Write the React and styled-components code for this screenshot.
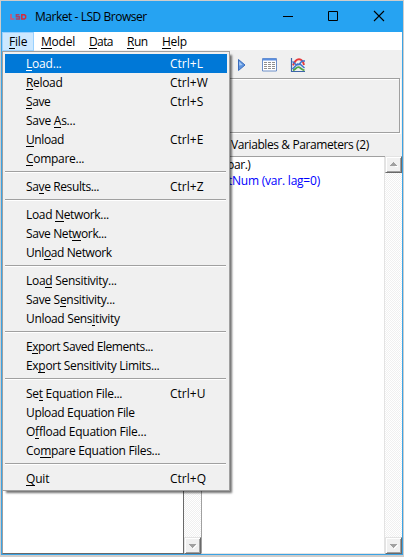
import React from "react";
import styled, { createGlobalStyle } from "styled-components";

const Global = createGlobalStyle`
  * { box-sizing: border-box; }
  body { margin: 0; overflow: hidden; }
`;

const Desktop = styled.div`
  width: 404px;
  height: 557px;
  padding: 1px 1px 2px 1px;
  background: #cfcdcb;
  font-family: "Open Sans", "Noto Sans", sans-serif;
  font-size: 12px;
  color: #000;
  cursor: default;
  white-space: pre;
`;

const Window = styled.div`
  position: relative;
  width: 402px;
  height: 554px;
  display: flex;
  flex-direction: column;
  border: 1px solid #3ca3e4;
  border-top: 0;
  background: #f0f0f0;
`;

const TitleBar = styled.div`
  height: 31px;
  margin: 0 -1px;
  display: flex;
  align-items: center;
  flex: none;
  background: #26a3f2;
  padding-left: 8px;
`;

const Title = styled.div`
  flex: 1;
  padding-left: 8px;
  line-height: 31px;
  letter-spacing: -0.46px;
`;

const Controls = styled.div`
  display: flex;
  width: 137px;
  height: 31px;
`;

const Control = styled.svg`
  width: 46px;
  height: 31px;
  flex: none;
  fill: none;
  stroke: #000;
`;

const MenuBar = styled.div`
  height: 18px;
  flex: none;
  display: flex;
  background: #fff;
`;

const MenuTitle = styled.div`
  width: ${(p) => p.$w}px;
  height: ${(p) => (p.$open ? 19 : 18)}px;
  line-height: 19px;
  padding-left: 7px;
  letter-spacing: ${(p) => p.$track || 0}px;
  background: ${(p) => (p.$open ? "#cce8ff" : "transparent")};
  box-shadow: ${(p) => (p.$open ? "inset 0 0 0 1px #99d1ff" : "none")};
`;

const Key = styled.span`
  box-shadow: 0 1px 0 currentColor;
  display: inline-block;
  line-height: 13px;
`;

const Toolbar = styled.div`
  height: 28px;
  flex: none;
  display: flex;
  padding: 7px 0 0 235px;
`;

const ToolIcon = styled.svg`
  width: ${(p) => p.$w}px;
  height: 16px;
  margin-right: ${(p) => p.$gap || 0}px;
  flex: none;
`;

const InfoPanel = styled.div`
  height: 55px;
  flex: none;
  margin: 0 2px 0 0;
  border: 1px solid #a0a0a0;
  box-shadow: inset 1px 1px 0 #fff, 1px 1px 0 #fff;
`;

const Caption = styled.div`
  height: 23px;
  flex: none;
  line-height: 24px;
  padding-left: 229px;
  letter-spacing: -0.4px;
`;

const Lists = styled.div`
  flex: 1;
  display: grid;
  grid-template-columns: 199px 201px;
`;

const ListBox = styled.div`
  display: flex;
  min-width: 0;
  background: #fff;
  border-top: 1px solid #a0a0a0;
  border-left: 1px solid #a0a0a0;
  border-bottom: 1px solid ${(p) => p.$edge};
`;

const ListRows = styled.div`
  flex: 1;
  overflow: hidden;
  padding: 0 0 0 29px;
  border-right: 1px solid ${(p) => p.$edge};
`;

const ListRow = styled.div`
  height: 16px;
  line-height: 16px;
  color: ${(p) => p.$color};
  text-indent: ${(p) => p.$shift}px;
  letter-spacing: ${(p) => p.$track}px;
`;

const ScrollTrack = styled.div`
  width: 17px;
  display: flex;
  flex-direction: column;
  justify-content: space-between;
  margin: -1px 0;
  background: repeating-conic-gradient(#f0f0f0 0 25%, #fff 0 50%) 0 0 / 2px 2px;
`;

const ScrollButton = styled.svg`
  width: 17px;
  height: 17px;
  display: block;
  background: #f0f0f0;
  border: 1px solid;
  border-color: #e3e3e3 #696969 #696969 #e3e3e3;
  box-shadow: inset 1px 1px 0 #fff, inset -1px -1px 0 #a0a0a0;
`;

const Popup = styled.div`
  position: absolute;
  left: 0;
  top: 50px;
  width: 228px;
  height: 440px;
  padding: 2px 3px 2px 2px;
  border: 1px solid #a0a0a0;
  background: #f0f0f0;
  box-shadow: 3px 3px 2px -1px rgba(0, 0, 0, 0.55);
`;

const Item = styled.div`
  height: 19px;
  line-height: 19px;
  display: flex;
  margin-right: -1px;
  padding-left: 21px;
  background: ${(p) => (p.$active ? "#0078d7" : "transparent")};
  color: ${(p) => (p.$active ? "#fff" : "#000")};
`;

const ItemText = styled.span`
  width: 144px;
  letter-spacing: ${(p) => p.$track}px;
`;

const Shortcut = styled.span`
  letter-spacing: 0;
`;

const Separator = styled.div`
  height: 2px;
  margin: 3px 0 4px;
  background: linear-gradient(#a0a0a0 50%, #fff 50%);
`;

/* Text with "&" in front of the letter that is the access key. */
function Mnemonic({ text }) {
  const i = text.indexOf("&");
  if (i < 0) return text;
  return (
    <>
      {text.slice(0, i)}
      <Key>{text[i + 1]}</Key>
      {text.slice(i + 2)}
    </>
  );
}

const FILE_MENU = [
  ["&Load...", "Ctrl+L", -0.2],
  ["&Reload", "Ctrl+W", -0.32],
  ["&Save", "Ctrl+S", -0.4],
  ["Save &As...", "", -0.26],
  ["&Unload", "Ctrl+E", -0.4],
  ["&Compare...", "", -0.28],
  null,
  ["Sa&ve Results...", "Ctrl+Z", -0.38],
  null,
  ["Load &Network...", "", -0.34],
  ["Save Net&work...", "", -0.38],
  ["Unl&oad Network", "", -0.4],
  null,
  ["Loa&d Sensitivity...", "", -0.29],
  ["Save S&ensitivity...", "", -0.3],
  ["Unload Sens&itivity", "", -0.33],
  null,
  ["E&xport Saved Elements...", "", -0.43],
  ["Ex&port Sensitivity Limits...", "", -0.3],
  null,
  ["Se&t Equation File...", "Ctrl+U", -0.3],
  ["Upload Equation File", "", -0.34],
  ["O&ffload Equation File...", "", -0.25],
  ["Co&mpare Equation Files...", "", -0.31],
  null,
  ["&Quit", "Ctrl+Q", -0.2],
];

const Logo = () => (
  <svg width="18" height="10" viewBox="0 0 18 10" fill="none" strokeWidth="1.5">
    <path d="M2 2v5h3.4" stroke="#d8536e" />
    <path d="M10.4 2.7H7.4v2h3V7H6.8" stroke="#a84468" />
    <path d="M12.8 2.7h2.6l1.2 1v2.2l-1.2 1.1h-2.6z" stroke="#d42a3c" />
  </svg>
);

function Scroll() {
  return (
    <ScrollTrack>
      <ScrollButton viewBox="0 0 15 15" shapeRendering="crispEdges">
        <path d="M5 10h7v-1z" fill="#fff" />
        <path d="M7 5h1v1h1v1h1v1h1v1H4V8h1V7h1V6h1z" fill="#a0a0a0" />
      </ScrollButton>
      <ScrollButton viewBox="0 0 15 15" shapeRendering="crispEdges">
        <path d="M8 10h1V9h1V8h1V7h1v1h-1v1h-1v1H9v1H8z" fill="#fff" />
        <path d="M4 6h7v1h-1v1H9v1H8v1H7V9H6V8H5V7H4z" fill="#a0a0a0" />
      </ScrollButton>
    </ScrollTrack>
  );
}

export default function App() {
  return (
    <Desktop>
      <Global />
      <Window>
        <TitleBar>
          <Logo />
          <Title>Market - LSD Browser</Title>
          <Controls>
            <Control><path d="M17 15.5h10" /></Control>
            <Control><path d="M16.5 10.5h9v9h-9z" /></Control>
            <Control><path d="M16 10l10 10M26 10l-10 10" strokeWidth="1.1" /></Control>
          </Controls>
        </TitleBar>
        <MenuBar>
          <MenuTitle $w={32} $track={-0.2} $open><Mnemonic text="&File" /></MenuTitle>
          <MenuTitle $w={48} $track={-0.2}><Mnemonic text="&Model" /></MenuTitle>
          <MenuTitle $w={38} $track={-0.6}><Mnemonic text="&Data" /></MenuTitle>
          <MenuTitle $w={35} $track={-0.5}><Mnemonic text="&Run" /></MenuTitle>
          <MenuTitle $w={42} $track={-0.3}><Mnemonic text="&Help" /></MenuTitle>
        </MenuBar>
        <Toolbar>
          <ToolIcon $w={10} $gap={15} viewBox="0 0 10 16">
            <path d="M1.5 2.5v11L8 8z" fill="#5e95e0" stroke="#3a6cbd" />
            <path d="M2.2 4.5v4L5.5 8z" fill="#a9cbf5" />
          </ToolIcon>
          <ToolIcon $w={16} $gap={12} viewBox="0 0 16 16">
            <path d="M.5 1.5h14v12.5H.5z" fill="#fff" stroke="#6c8fc8" />
            <path d="M1 2.5h13" stroke="#5b8fe0" strokeWidth="2" />
            <path d="M2 5.5h11M2 7.5h11M2 9.5h11M2 11.5h11" stroke="#8f8f8f" strokeDasharray="3 1" />
          </ToolIcon>
          <ToolIcon $w={16} viewBox="0 0 16 16" fill="none">
            <path d="M3 13.2c2-.4 3.2-3 5.3-3s3 2.4 6.2 3.2" stroke="#4fa548" strokeWidth="1.8" />
            <path d="M3 8.4C4.4 4.600 6.400 2.200 9 2.200s4.200 2.200 5 5.800" stroke="#e5383b" strokeWidth="1.9" />
            <path d="M2.500 4.500l4 3.500 2.500-.5 3-3.500h3M2.500 12l5-5 3 .5 4 3.500" stroke="#3f74cb" strokeWidth="1.5" />
            <path d="M1.500 1v13.500H15" stroke="#3d65a8" strokeWidth="1.2" />
          </ToolIcon>
        </Toolbar>
        <InfoPanel />
        <Caption>Variables &amp; Parameters (2)</Caption>
        <Lists>
          <ListBox $edge="#696969">
            <ListRows $edge="#696969" />
            <Scroll />
          </ListBox>
          <ListBox $edge="#e3e3e3">
            <ListRows $edge="#e3e3e3">
              <ListRow $color="#000" $shift={-7} $track={-0.45}>(par.)</ListRow>
              <ListRow $color="#0000ff" $shift={-22} $track={-0.22}>FirstNum (var. lag=0)</ListRow>
            </ListRows>
            <Scroll />
          </ListBox>
        </Lists>
        <Popup>
          {FILE_MENU.map((row, i) =>
            row ? (
              <Item key={i} $active={i === 0}>
                <ItemText $track={row[2]}><Mnemonic text={row[0]} /></ItemText>
                <Shortcut>{row[1]}</Shortcut>
              </Item>
            ) : (
              <Separator key={i} />
            )
          )}
        </Popup>
      </Window>
    </Desktop>
  );
}
